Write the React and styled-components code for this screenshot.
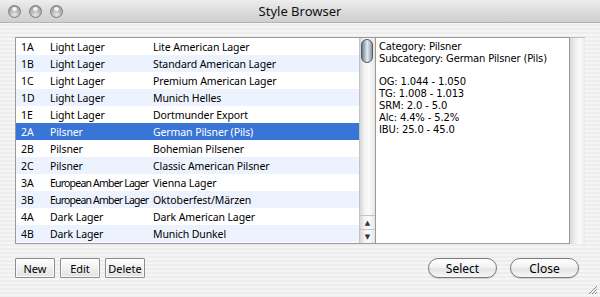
import React from "react";
import styled, { createGlobalStyle } from "styled-components";

const Global = createGlobalStyle`
  html, body { margin: 0; padding: 0; }
  body { width: 600px; height: 297px; overflow: hidden; font-family: "Noto Sans", "DejaVu Sans", sans-serif; }
`;

const Window = styled.div`
  width: 600px;
  height: 297px;
  display: flex;
  flex-direction: column;
  background: repeating-linear-gradient(180deg, #ededed 0 2px, #f5f5f5 2px 4px);
  position: relative;
`;

const TitleBar = styled.div`
  height: 22px;
  flex: none;
  display: flex;
  align-items: center;
  padding: 0 8px;
  background: linear-gradient(180deg, #eeeeee 0%, #dcdcdc 50%, #cfcfcf 100%);
  border-bottom: 1px solid #b5b5b5;
  position: relative;
`;

const Lights = styled.div`
  display: flex;
  gap: 8px;
`;

const Light = styled.div`
  width: 13px;
  height: 13px;
  border-radius: 50%;
  box-sizing: border-box;
  border: 1px solid #7d7d7d;
  background: radial-gradient(circle at 50% 80%, #e8e8e8 0%, #b8b8b8 45%, #8f8f8f 100%);
  position: relative;
  &::after {
    content: "";
    position: absolute;
    left: 3px;
    top: 1px;
    width: 5px;
    height: 4px;
    border-radius: 50%;
    background: rgba(255,255,255,0.85);
  }
`;

const Title = styled.div`
  position: absolute;
  left: 0;
  right: 0;
  text-align: center;
  font-size: 13px;
  color: #111;
  pointer-events: none;
`;

const Body = styled.div`
  flex: 1;
  display: flex;
  flex-direction: column;
  padding: 14px 15px 0 15px;
`;

const Panes = styled.div`
  display: flex;
  height: 207px;
`;

const ListBox = styled.div`
  display: flex;
  width: 360px;
  box-sizing: border-box;
  border: 1px solid #9a9a9a;
  border-right: none;
  background: #fff;
`;

const Rows = styled.div`
  flex: 1;
  display: flex;
  flex-direction: column;
`;

const Row = styled.div`
  height: 17px;
  display: flex;
  align-items: center;
  font-size: 10.5px;
  letter-spacing: -0.1px;
  background: ${p => (p.$sel ? "#3875d7" : p.$alt ? "#edf3fe" : "#fff")};
  color: ${p => (p.$sel ? "#fff" : "#000")};
`;

const Cell = styled.div`
  white-space: nowrap;
  overflow: hidden;
  width: ${p => p.$w}px;
  padding-left: ${p => p.$pl || 0}px;
  box-sizing: border-box;
  letter-spacing: ${p => (p.$narrow ? "-0.8px" : "inherit")};
`;

const VScroll = styled.div`
  width: 16px;
  display: flex;
  flex-direction: column;
  background: linear-gradient(90deg, #d6d6d6 0%, #f3f3f3 30%, #fbfbfb 60%, #e6e6e6 100%);
  border-left: 1px solid #c4c4c4;
  box-sizing: border-box;
`;

const Track = styled.div`
  flex: 1;
  position: relative;
`;

const Thumb = styled.div`
  position: absolute;
  left: 1px;
  top: 1px;
  width: 12px;
  height: 24px;
  border-radius: 6px;
  box-sizing: border-box;
  border: 1px solid #4e5a66;
  background: linear-gradient(90deg, #6d7a86 0%, #c9d2da 40%, #e2e8ee 55%, #8a96a2 100%);
`;

const Arrow = styled.div`
  height: 13px;
  display: flex;
  align-items: center;
  justify-content: center;
  border-top: 1px solid #c4c4c4;
  font-size: 7px;
  color: #333;
  line-height: 1;
`;

const Detail = styled.div`
  width: 195px;
  box-sizing: border-box;
  background: #fff;
  border: 1px solid #9a9a9a;
  padding: 3px 3px;
  font-family: "DejaVu Sans", sans-serif;
  font-size: 10px;
  letter-spacing: -0.15px;
  line-height: 11.8px;
  color: #000;
`;

const Line = styled.div`
  height: 11.8px;
  white-space: nowrap;
`;

const SideTrack = styled.div`
  width: 15px;
  box-sizing: border-box;
  border-top: 1px solid #bdbdbd;
  background: linear-gradient(90deg, #d9d9d9 0%, #f2f2f2 40%, #fafafa 70%, #e8e8e8 100%);
`;

const Footer = styled.div`
  display: flex;
  align-items: center;
  margin-top: 14px;
`;

const LeftButtons = styled.div`
  display: flex;
  gap: 5px;
`;

const SquareButton = styled.button`
  height: 20px;
  width: ${p => p.$w}px;
  padding: 0;
  font-family: inherit;
  font-size: 11px;
  color: #000;
  border: 1px solid #8e8e8e;
  border-radius: 1px;
  background: linear-gradient(180deg, #ffffff 0%, #f0f0f0 50%, #e2e2e2 100%);
  box-shadow: inset 0 0 0 1px #fafafa;
`;

const RightButtons = styled.div`
  margin-left: auto;
  display: flex;
  gap: 13px;
  margin-right: 6px;
`;

const PillButton = styled.button`
  height: 20px;
  width: 69px;
  padding: 0;
  font-family: inherit;
  font-size: 12px;
  color: #000;
  border: 1px solid #7a7a7a;
  border-radius: 10px;
  background: linear-gradient(180deg, #ffffff 0%, #f4f4f4 45%, #e4e4e4 55%, #f8f8f8 100%);
  box-shadow: 0 1px 1px rgba(0,0,0,0.15);
`;

const Grip = styled.svg`
  position: absolute;
  right: 2px;
  bottom: 2px;
`;

const data = [
  ["1A", "Light Lager", "Lite American Lager"],
  ["1B", "Light Lager", "Standard American Lager"],
  ["1C", "Light Lager", "Premium American Lager"],
  ["1D", "Light Lager", "Munich Helles"],
  ["1E", "Light Lager", "Dortmunder Export"],
  ["2A", "Pilsner", "German Pilsner (Pils)"],
  ["2B", "Pilsner", "Bohemian Pilsener"],
  ["2C", "Pilsner", "Classic American Pilsner"],
  ["3A", "European Amber Lager", "Vienna Lager"],
  ["3B", "European Amber Lager", "Oktoberfest/Märzen"],
  ["4A", "Dark Lager", "Dark American Lager"],
  ["4B", "Dark Lager", "Munich Dunkel"],
];

const details = [
  "Category: Pilsner",
  "Subcategory: German Pilsner (Pils)",
  "",
  "OG: 1.044 - 1.050",
  "TG: 1.008 - 1.013",
  "SRM: 2.0 - 5.0",
  "Alc: 4.4% - 5.2%",
  "IBU: 25.0 - 45.0",
];

export default function App() {
  return (
    <>
      <Global />
      <Window>
        <TitleBar>
          <Lights>
            <Light />
            <Light />
            <Light />
          </Lights>
          <Title>Style Browser</Title>
        </TitleBar>
        <Body>
          <Panes>
            <ListBox>
              <Rows>
                {data.map((r, i) => (
                  <Row key={r[0]} $alt={i % 2 === 1} $sel={i === 5}>
                    <Cell $w={34} $pl={5}>{r[0]}</Cell>
                    <Cell $w={103} $narrow={r[1].length > 15}>{r[1]}</Cell>
                    <Cell $w={200}>{r[2]}</Cell>
                  </Row>
                ))}
              </Rows>
              <VScroll>
                <Track>
                  <Thumb />
                </Track>
                <Arrow>▲</Arrow>
                <Arrow>▼</Arrow>
              </VScroll>
            </ListBox>
            <Detail>
              {details.map((d, i) => (
                <Line key={i}>{d}</Line>
              ))}
            </Detail>
            <SideTrack />
          </Panes>
          <Footer>
            <LeftButtons>
              <SquareButton $w={40}>New</SquareButton>
              <SquareButton $w={40}>Edit</SquareButton>
              <SquareButton $w={40}>Delete</SquareButton>
            </LeftButtons>
            <RightButtons>
              <PillButton>Select</PillButton>
              <PillButton>Close</PillButton>
            </RightButtons>
          </Footer>
        </Body>
        <Grip width="10" height="10" viewBox="0 0 10 10">
          <path d="M9 1 L1 9 M9 4 L4 9 M9 7 L7 9" stroke="#888" strokeWidth="1" />
        </Grip>
      </Window>
    </>
  );
}
